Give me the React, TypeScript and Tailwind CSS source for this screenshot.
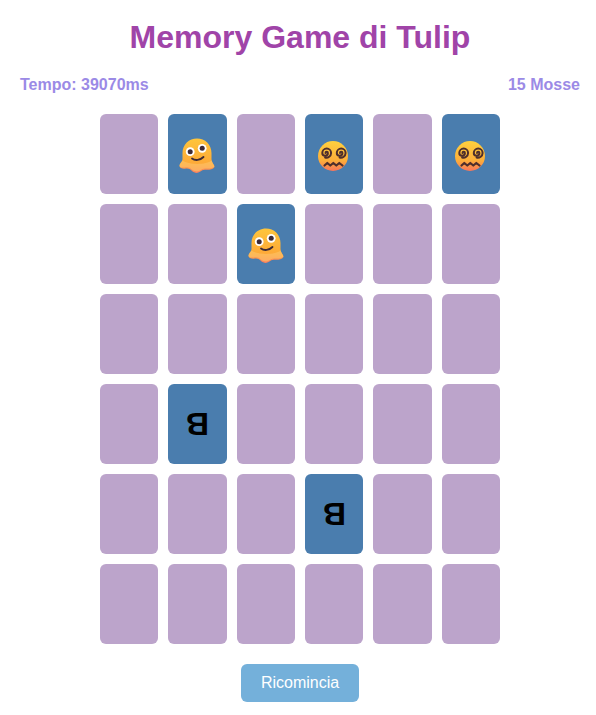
const BACK = 'h-20 rounded-md bg-[#bca4cb]'
const FRONT = 'h-20 rounded-md bg-[#4a7dae] flex items-center justify-center'

function Blob() {
  return (
    <svg viewBox="0 0 36 36" className="w-9 h-9 translate-y-[2px]">
      <defs>
        <linearGradient id="blobBody" x1="0" y1="0" x2="0" y2="1">
          <stop offset="0" stopColor="#fec53c" />
          <stop offset="0.72" stopColor="#fdaa38" />
          <stop offset="1" stopColor="#fa7f62" />
        </linearGradient>
      </defs>
      <path
        d="M18 0.500C10 0.500 3.500 6.500 3.500 15V21C3.500 24 0.300 25.500 0.500 28C0.800 30.500 4 31 7 30.500C9.500 30.200 11 31 12.800 32.800C15 35 18.500 35.800 21 33.800C23 32.200 24.500 31.500 27 31.800C30 32 34 31.500 35.300 29.300C36.300 27.300 32.500 25 32.500 21V15C32.500 6.500 26 0.500 18 0.500Z"
        fill="url(#blobBody)"
      />
      <path
        d="M3.300 22.500C2.500 24.500 0.300 25.800 0.500 28C0.800 29.500 4 29.800 7 29.300C9.500 29 11 29.800 12.800 31.500C15 33.500 18.500 34.300 21 32.500C23 31 24.500 30.300 27 30.500C30 30.800 34 30.300 35.300 28.800C35.500 27 33.200 25 32.700 22.500C27 27 10 27 3.300 22.500Z"
        fill="#fdc76b"
        opacity="0.6"
      />
      <circle cx="11.200" cy="13.700" r="4.400" fill="#fff" />
      <circle cx="23.200" cy="10.300" r="4.400" fill="#fff" />
      <circle cx="11.200" cy="13.700" r="2.500" fill="#3d2a35" />
      <circle cx="23.200" cy="10.300" r="2.500" fill="#3d2a35" />
      <path d="M13 20.500C16 22.800 21 22.500 24.500 19" fill="none" stroke="#3d2a35" strokeWidth="1.800" strokeLinecap="round" />
    </svg>
  )
}

function Dizzy() {
  return (
    <svg viewBox="0 0 30 30" className="w-[30px] h-[30px] -translate-x-px translate-y-[2px]">
      <defs>
        <linearGradient id="dizzyFace" x1="0" y1="0" x2="0" y2="1">
          <stop offset="0" stopColor="#ffd03e" />
          <stop offset="0.65" stopColor="#fdae3a" />
          <stop offset="1" stopColor="#f9755a" />
        </linearGradient>
      </defs>
      <circle cx="15" cy="15" r="15" fill="url(#dizzyFace)" />
      <path d="M7.500 12a1.200 1.200 0 0 1 2.400 0a2.800 2.800 0 0 1 -5.600 0a4.400 4.400 0 0 1 8.800 0a4.800 4.800 0 0 1 -6 4.500" fill="none" stroke="#4f2f2c" strokeWidth="2" strokeLinecap="round" />
      <path d="M22 12a1.200 1.200 0 0 1 2.400 0a2.800 2.800 0 0 1 -5.600 0a4.400 4.400 0 0 1 8.800 0a4.800 4.800 0 0 1 -6 4.500" fill="none" stroke="#4f2f2c" strokeWidth="2" strokeLinecap="round" />
      <path d="M6.500 24.500L9.300 22L12.300 24.500L15.300 22L18.300 24.500L21.300 22L24.500 24.500" fill="none" stroke="#4f2f2c" strokeWidth="2.200" strokeLinecap="round" strokeLinejoin="round" />
    </svg>
  )
}

const FACE_UP: Record<number, 'blob' | 'dizzy' | 'b'> = {
  1: 'blob',
  3: 'dizzy',
  5: 'dizzy',
  8: 'blob',
  19: 'b',
  27: 'b',
}

function Card({ face }: { face?: 'blob' | 'dizzy' | 'b' }) {
  if (!face) return <div className={BACK} />
  return (
    <div className={FRONT}>
      {face === 'blob' && <Blob />}
      {face === 'dizzy' && <Dizzy />}
      {face === 'b' && <span className="text-[32px] font-bold text-black -scale-x-100 -scale-y-100 leading-none">B</span>}
    </div>
  )
}

export default function App() {
  const cards = Array.from({ length: 36 }, (_, i) => i)

  return (
    <div className="w-[596px] h-[715px] bg-white overflow-hidden">
      <div className="w-[600px] flex flex-col items-center font-['Liberation_Sans',Arial,sans-serif]">
        <h1 className="mt-[19px] h-[37px] text-[32px] leading-[37px] font-bold text-[#a044a8]">Memory Game di Tulip</h1>
        <div className="mt-5 w-full px-5 flex justify-between text-base leading-[18px] font-bold text-[#9b8ae6]">
          <span>Tempo: 39070ms</span>
          <span>15 Mosse</span>
        </div>
        <div className="mt-5 w-[400px] grid grid-cols-6 gap-[10px]">
          {cards.map((i) => (
            <Card key={i} face={FACE_UP[i]} />
          ))}
        </div>
        <button className="mt-5 w-[118px] h-[38px] rounded-md bg-[#74b0da] text-white text-base">Ricomincia</button>
      </div>
    </div>
  )
}
